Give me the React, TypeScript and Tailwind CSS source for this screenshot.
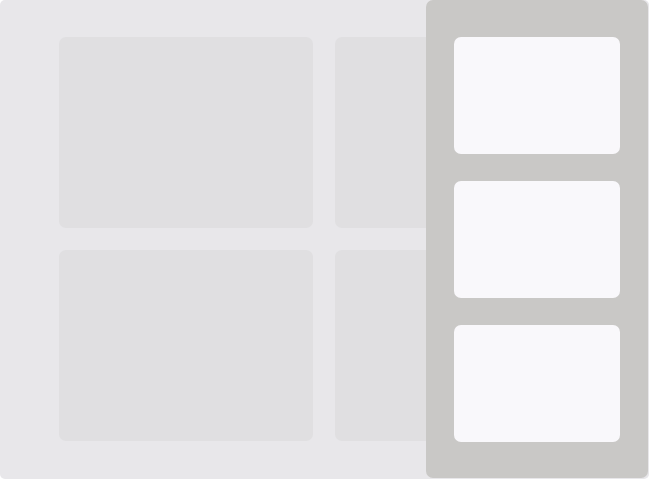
export default function App() {
  return (
    <div className="relative h-[479px] w-[649px] overflow-hidden rounded-[5px] bg-[#e8e7ea]">
      <div className="grid grid-cols-[254px_254px] grid-rows-[191px_191px] gap-[22px] pl-[59px] pt-[37px]">
        <div className="rounded-[7px] bg-[#e0dfe1]" />
        <div className="rounded-[7px] bg-[#e0dfe1]" />
        <div className="rounded-[7px] bg-[#e0dfe1]" />
        <div className="rounded-[7px] bg-[#e0dfe1]" />
      </div>
      <aside className="absolute top-0 bottom-[1px] right-[1px] flex w-[222px] flex-col gap-[27px] rounded-[7px] bg-[#c9c8c6] px-[28px] pt-[37px]">
        <div className="h-[117px] rounded-[7px] bg-[#f9f8fb]" />
        <div className="h-[117px] rounded-[7px] bg-[#f9f8fb]" />
        <div className="h-[117px] rounded-[7px] bg-[#f9f8fb]" />
      </aside>
    </div>
  );
}
